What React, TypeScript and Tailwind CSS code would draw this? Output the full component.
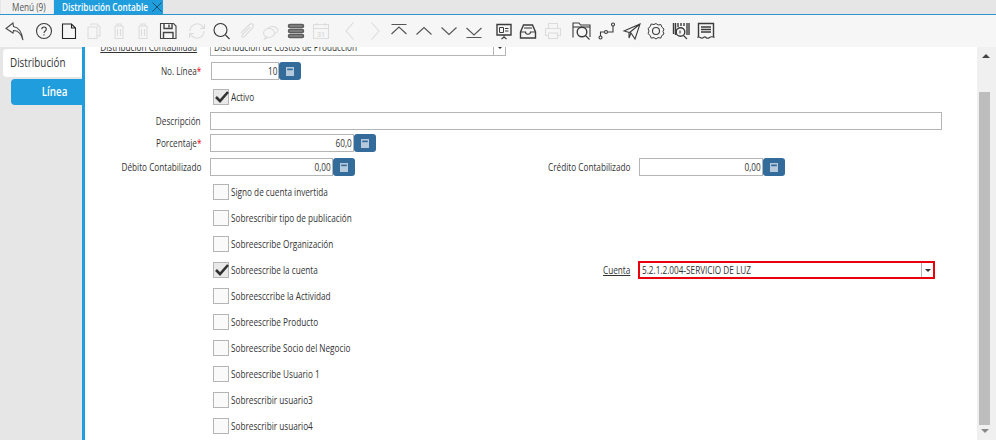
import React from "react";

const DARK = "#3c3c3c";
const LIGHT = "#dcdcdc";

type T = { x: string; c: string; n: React.ReactNode };

const tools: T[] = [
  { x: "", c: "#4a4a4a", n: <path d="M11 4 L4 9.5 L11 14 L11.5 11.5 C16 11.5 19 14 21 21 C20 13 17 8.5 11.5 7.5 Z" /> },
  { x: "ml-[5px]", c: DARK, n: <><circle cx="12" cy="12" r="7.5" /><path d="M9.8 10.2c0-3 4.5-3 4.5 0 0 1.9-2.3 1.7-2.3 3.8M12 15.3v1.2" /></> },
  { x: "", c: "#222", n: <path d="M5.5 5h9l4 4v10.5h-13zM14.5 5v4h4" /> },
  { x: "", c: LIGHT, n: <><path d="M9 6.5V5h6l3 3v9h-3" /><path d="M6 8h9v11.5H6z" /></> },
  { x: "", c: LIGHT, n: <path d="M8 7h8M10 7V5h4v2M8 7v12.5h8V7M10.5 10v7M13.5 10v7" /> },
  { x: "", c: LIGHT, n: <path d="M8 7h8M10 7V5h4v2M8 7v12.5h8V7M10.5 10v7M13.5 10v7" /> },
  { x: "", c: "#444", n: <><path d="M4.5 4.5h13l2.5 2.5v12.5h-15.5z" /><path d="M8 4.5v5h8v-5M13 5.5v3M7.5 19.5v-6h9.5v6" strokeWidth="1.4" /></> },
  { x: "ml-[4px]", c: LIGHT, n: <><path d="M5 12a7 7 0 0 1 12-5l2 2M19.5 5v4.5h-4.5" /><path d="M19 12a7 7 0 0 1-12 5l-2-2M4.5 19v-4.5h4.5" /></> },
  { x: "", c: "#333", n: <><circle cx="10.5" cy="11" r="6.5" /><path d="M15.5 16l4 4" /></> },
  { x: "", c: LIGHT, n: <path d="M6 14l8-8c3-3 6 0 3.5 3l-8 8.5c-2 1.5-3.5 0-2-2l7.5-7.5" /> },
  { x: "", c: LIGHT, n: <><path d="M9 9a6 5 0 0 1 10 2c0 2-2 3.5-4 3.5" /><ellipse cx="10" cy="14" rx="5.5" ry="4.5" /><path d="M7 17.5l-1.5 2.5 3.5-1.5" /></> },
  { x: "", c: "#5c5c5c", n: <><rect x="4.5" y="5.5" width="15" height="3" rx="1.5" strokeWidth="1.5" fill="#888" /><rect x="4.5" y="10.5" width="15" height="3" rx="1.5" strokeWidth="1.5" fill="#888" /><rect x="4.5" y="15.5" width="15" height="3" rx="1.5" strokeWidth="1.5" fill="#888" /></> },
  { x: "", c: LIGHT, n: <><path d="M4.5 5.5h15v14h-15zM4.5 9.5h15M8 4v3M16 4v3" /><text x="12" y="17.5" textAnchor="middle" fontSize="7" fill="#d0d0d0" stroke="none" fontFamily="Open Sans">31</text></> },
  { x: "ml-[4px]", c: LIGHT, n: <path d="M15.5 3.5 L8 12 L15.5 20.5" /> },
  { x: "", c: LIGHT, n: <path d="M8.5 3.5 L16 12 L8.5 20.5" /> },
  { x: "", c: "#555", n: <path d="M4.5 5.5h15M4.5 15l7.5-7 7.5 7" /> },
  { x: "", c: "#555", n: <path d="M4.5 15.5l7.5-7 7.5 7" /> },
  { x: "", c: "#555", n: <path d="M4.5 8.5l7.5 7 7.5-7" /> },
  { x: "", c: "#555", n: <path d="M4.5 9l7.5 7 7.5-7M4.5 18.5h15" /> },
  { x: "ml-[5px]", c: DARK, n: <><path d="M5 5.5h14v10.5h-14z" strokeWidth="1.4" /><path d="M7.5 8.5h4v5h-4zM13 9.5h3.5M13 12h3.5" strokeWidth="1" /><path d="M12 16v2M9.5 20l2.5-2 2.5 2" /></> },
  { x: "", c: DARK, n: <><path d="M4.5 13l3-7h9l3 7v6h-15z" strokeWidth="1.4" /><path d="M4.5 13h5c0 3 5 3 5 0h5" /><path d="M8 9h8" /></> },
  { x: "", c: LIGHT, n: <><path d="M7.5 9V4.5h9V9" /><path d="M4.5 9.5h15v7h-3M7.5 16.5h-3v-7" /><path d="M7.5 14h9v5.5h-9z" /></> },
  { x: "ml-[4px]", c: DARK, n: <><path d="M3 18.5V4h6l1.5 2H20v12" /><path d="M3 8h17" /><circle cx="12" cy="13" r="4.8" strokeWidth="1.4" /><path d="M15.5 16.5l4 4" /></> },
  { x: "", c: DARK, n: <><circle cx="5.5" cy="18.5" r="1.5" /><path d="M5.5 17v-4h4" /><circle cx="11" cy="13" r="1.5" /><path d="M12.5 13h5.5V7" /><circle cx="18" cy="5.5" r="1.5" /></> },
  { x: "", c: DARK, n: <path d="M4 12l16-7-5 15-4-6zM20 5L9 14M11 14l-2 5v-5" /> },
  { x: "", c: DARK, n: <><path d="M12 4.5l2 1.5 2.8-.5 1 2.6 2.2 1.9-1 2.5 1 2.5-2.2 1.5-1 2.6-2.8-.5-2 1.4-2-1.4-2.8.5-1-2.6L4 14.5l1-2.5-1-2.5 2.2-1.9 1-2.6 2.8.5z" strokeWidth="1" /><circle cx="12" cy="12" r="3.5" /></> },
  { x: "", c: DARK, n: <><path d="M4.5 4v11M6.5 4v12M9 4v4M12 4v3M15 4v3M18 4v12M20 4v12" strokeWidth="1.4" /><circle cx="11.5" cy="13" r="4.3" strokeWidth="1.4" /><path d="M14.5 16.5l3.5 3.5M11 11.5v3" /></> },
  { x: "", c: DARK, n: <><path d="M4.5 18V4.5h15V18" strokeWidth="1.4" /><path d="M7 8h10M7 10.5h10M7 13h10" strokeWidth="1.4" /><path d="M3.5 18.5c2-2 3 1.5 5 .5s2-2 3.5-.5 2 1 3.5 0 2.5-1.5 5 0" /></> },
];

function L({ children, className = "" }: { children: React.ReactNode; className?: string }) {
  return <span className={`block origin-left scale-x-[.82] whitespace-nowrap text-[10px] text-[#333] ${className}`}>{children}</span>;
}

function R({ children, className = "" }: { children: React.ReactNode; className?: string }) {
  return <span className={`block origin-right scale-x-[.82] whitespace-nowrap text-[10px] text-[#333] ${className}`}>{children}</span>;
}

function CalcBtn() {
  return (
    <span className="flex h-[18px] w-[22px] shrink-0 items-center justify-center rounded-[3px] bg-[#336b9b]">
      <svg width="8" height="9" viewBox="0 0 8 9">
        <path d="M0 0h8v9H0z" fill="#b5c9da" />
        <path d="M1.2 1.6h5.6v1.6h-5.6z" fill="#336b9b" />
      </svg>
    </span>
  );
}

function NumInput({ w, v }: { w: string; v: string }) {
  return (
    <span className={`${w} flex h-[18px] shrink-0 items-center justify-end border border-[#b5b5b5] bg-white pr-[1px]`}>
      <R>{v}</R>
    </span>
  );
}

function Label({ t, req, u, w = "w-[116px]" }: { t: string; req?: boolean; u?: boolean; w?: string }) {
  return (
    <span className={`${w} flex shrink-0 justify-end`}>
      <R className={u ? "underline" : ""}>
        {t}
        {req && <span className="text-[#e00]">*</span>}
      </R>
    </span>
  );
}

function Caret() {
  return (
    <span className="flex h-full w-[12px] shrink-0 items-center justify-center border-l border-[#b5b5b5]">
      <span className="border-x-[3px] border-t-[3px] border-x-transparent border-t-[#333]" />
    </span>
  );
}

function Check({ on, label, children }: { on?: boolean; label: string; children?: React.ReactNode }) {
  return (
    <div className="flex h-[26px] items-center pl-[128px]">
      <span className={`relative h-4 w-4 shrink-0 border border-[#b5b5b5] ${on ? "bg-[#e9e9e9]" : "bg-[#fafafa]"}`}>
        {on && (
          <svg className="absolute left-[-1px] top-[-1px]" width="17" height="16" viewBox="0 0 17 16" fill="none">
            <path d="M3 8l4 4 8-9" stroke="#333" strokeWidth="2.6" />
          </svg>
        )}
      </span>
      <span className="ml-[2px] flex w-[150px] shrink-0">
        <L>{label}</L>
      </span>
      {children}
    </div>
  );
}

export default function App() {
  return (
    <div className="flex h-[440px] w-[996px] flex-col overflow-hidden bg-white font-['Open_Sans',sans-serif]">
      <div className="flex h-[15px] shrink-0 items-stretch border-b border-[#2e95d0] bg-[#e6e6e6] pl-[1px]">
        <span className="flex w-[52px] items-center bg-[#f2f2f2] pl-[11px]">
          <L className="text-[#555]">Menú (9)</L>
        </span>
        <span className="ml-[1px] flex w-[109px] items-center justify-between bg-[#1f9ddd] pl-[8px] pr-[1px]">
          <span className="flex w-[86px]">
            <L className="font-semibold text-white">Distribución Contable</L>
          </span>
          <svg width="10" height="10" viewBox="0 0 10 10">
            <path d="M0.5 0.5l9 9M9.5 0.5l-9 9" stroke="#164e70" strokeWidth="1" />
          </svg>
        </span>
      </div>
      <div className="flex h-[32px] shrink-0 items-center bg-[#f6f6f6] pl-[2px]">
        {tools.map((t, i) => (
          <span key={i} className={`flex w-[24.8px] shrink-0 justify-center ${t.x}`}>
            <svg width="24" height="24" viewBox="0 0 24 24" fill="none" stroke={t.c} strokeWidth="1.1">
              {t.n}
            </svg>
          </span>
        ))}
      </div>
      <div className="flex min-h-0 flex-1">
        <aside className="w-[85px] shrink-0 border-r-[3px] border-[#1f9ddd] bg-[#e6e6e6] pl-[3px] pt-[2px]">
          <div className="flex h-[28px] items-center rounded-l-[4px] bg-white pl-[7px]">
            <L className="text-[12px]">Distribución</L>
          </div>
          <div className="ml-[8px] mt-[2px] flex h-[26px] items-center justify-end rounded-l-[4px] bg-[#1f9ddd] pr-[15px]">
            <R className="text-[12px] font-semibold text-white">Línea</R>
          </div>
        </aside>
        <main className="min-w-0 flex-1 overflow-hidden">
          <div className="-mt-[9px]">
            <div className="flex h-[18px] items-center">
              <Label t="Distribución Contabilidad" u w="w-[112px]" />
              <span className="ml-[13px] flex h-[18px] w-[296px] items-center justify-between border border-[#b5b5b5] bg-white pl-[3px]">
                <L>Distribución de Costos de Producción</L>
                <Caret />
              </span>
            </div>
            <div className="mt-[6px] flex h-[18px] items-center">
              <Label t="No. Línea" req />
              <span className="ml-[10px]"><NumInput w="w-[68px]" v="10" /></span>
              <CalcBtn />
            </div>
            <div className="mt-[4px]">
              <Check on label="Activo" />
            </div>
            <div className="mt-[2px] flex h-[18px] items-center">
              <Label t="Descripción" />
              <span className="ml-[9px] h-[18px] w-[732px] border border-[#b5b5b5] bg-white" />
            </div>
            <div className="mt-[4px] flex h-[18px] items-center">
              <Label t="Porcentaje" req />
              <span className="ml-[9px]"><NumInput w="w-[144px]" v="60,0" /></span>
              <CalcBtn />
            </div>
            <div className="mt-[6px] flex h-[18px] items-center">
              <Label t="Débito Contabilizado" />
              <span className="ml-[9px]"><NumInput w="w-[123px]" v="0,00" /></span>
              <CalcBtn />
              <span className="ml-[175px]"><Label t="Crédito Contabilizado" w="w-[100px]" /></span>
              <span className="ml-[9px]"><NumInput w="w-[124px]" v="0,00" /></span>
              <CalcBtn />
            </div>
            <div className="mt-[3px]">
              <Check label="Signo de cuenta invertida" />
              <Check label="Sobrescribir tipo de publicación" />
              <Check label="Sobreescribe Organización" />
              <Check on label="Sobreescribe la cuenta">
                <span className="ml-[222px] flex w-[28px] shrink-0">
                  <L className="underline">Cuenta</L>
                </span>
                <span className="ml-[7px] flex h-[18px] w-[297px] items-center justify-between border-2 border-[#e8000d] bg-white pl-[2px]">
                  <L>5.2.1.2.004-SERVICIO DE LUZ</L>
                  <Caret />
                </span>
              </Check>
              <Check label="Sobreesccribe la Actividad" />
              <Check label="Sobreescribe Producto" />
              <Check label="Sobreescribe Socio del Negocio" />
              <Check label="Sobreescribe Usuario 1" />
              <Check label="Sobrescribir usuario3" />
              <Check label="Sobrescribir usuario4" />
            </div>
          </div>
        </main>
        <div className="flex w-[19px] shrink-0 flex-col bg-[#f0f0f0] pl-[2px]">
          <span className="ml-[3px] mt-[7px] h-0 w-0 border-x-[4px] border-b-[4px] border-x-transparent border-b-[#444]" />
          <span className="mt-[34px] h-[333px] w-[11px] bg-[#bdbdbd]" />
          <span className="ml-[2px] mt-[4px] h-0 w-0 border-x-[4px] border-t-[4px] border-x-transparent border-t-[#888]" />
        </div>
      </div>
    </div>
  );
}
